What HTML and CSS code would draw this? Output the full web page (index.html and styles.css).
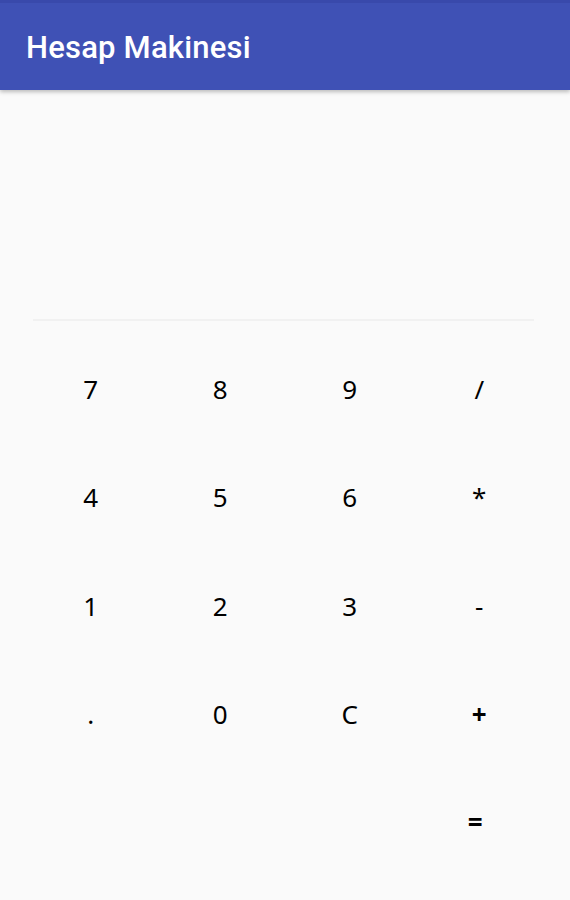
FILE: index.html
```html
<!DOCTYPE html>
<html lang="tr">
<head>
<meta charset="utf-8">
<title>Hesap Makinesi</title>
<link rel="stylesheet" href="styles.css">
</head>
<body>
<header class="appbar"><h1 class="title">Hesap Makinesi</h1></header>
<main class="content">
  <div class="display"></div>
  <div class="divider"></div>
  <div class="keys">
    <button class="key">7</button>
    <button class="key">8</button>
    <button class="key">9</button>
    <button class="key">/</button>
    <button class="key">4</button>
    <button class="key">5</button>
    <button class="key">6</button>
    <button class="key">*</button>
    <button class="key">1</button>
    <button class="key">2</button>
    <button class="key">3</button>
    <button class="key">-</button>
    <button class="key">.</button>
    <button class="key">0</button>
    <button class="key">C</button>
    <button class="key op">+</button>
    <button class="key eq">=</button>
  </div>
</main>
</body>
</html>
```
FILE: styles.css
```css
html, body {
  margin: 0;
  padding: 0;
  background: #fafafa;
}
body {
  width: 570px;
  height: 900px;
  overflow: hidden;
  font-family: "Noto Sans", sans-serif;
}
.appbar {
  height: 90px;
  background: #3f51b5;
  border-top: 3px solid #3949ab;
  box-sizing: border-box;
  box-shadow: 0 2px 4px rgba(0,0,0,0.25);
  display: flex;
  align-items: center;
  padding-left: 26px;
  position: relative;
  z-index: 1;
}
.title {
  margin: 0;
  font-family: Roboto, sans-serif;
  font-weight: 500;
  font-size: 31px;
  color: #ffffff;
  letter-spacing: 0.2px;
  padding-top: 2px;
}
.display {
  height: 229px;
}
.divider {
  margin: 0 36px 0 33px;
  height: 2px;
  background: #f1f1f1;
}
.keys {
  display: grid;
  grid-template-columns: repeat(4, 129.5px);
  grid-auto-rows: 108.3px;
  padding: 14px 0 0 26px;
}
.key {
  border: none;
  background: transparent;
  font-family: "Noto Sans", sans-serif;
  font-weight: 400;
  font-size: 26px;
  color: #000000;
  padding: 0;
  margin: 0;
}
.op {
  font-weight: 700;
}
.eq {
  grid-column: 4;
  padding-right: 8px;
  font-weight: 700;
}
```
